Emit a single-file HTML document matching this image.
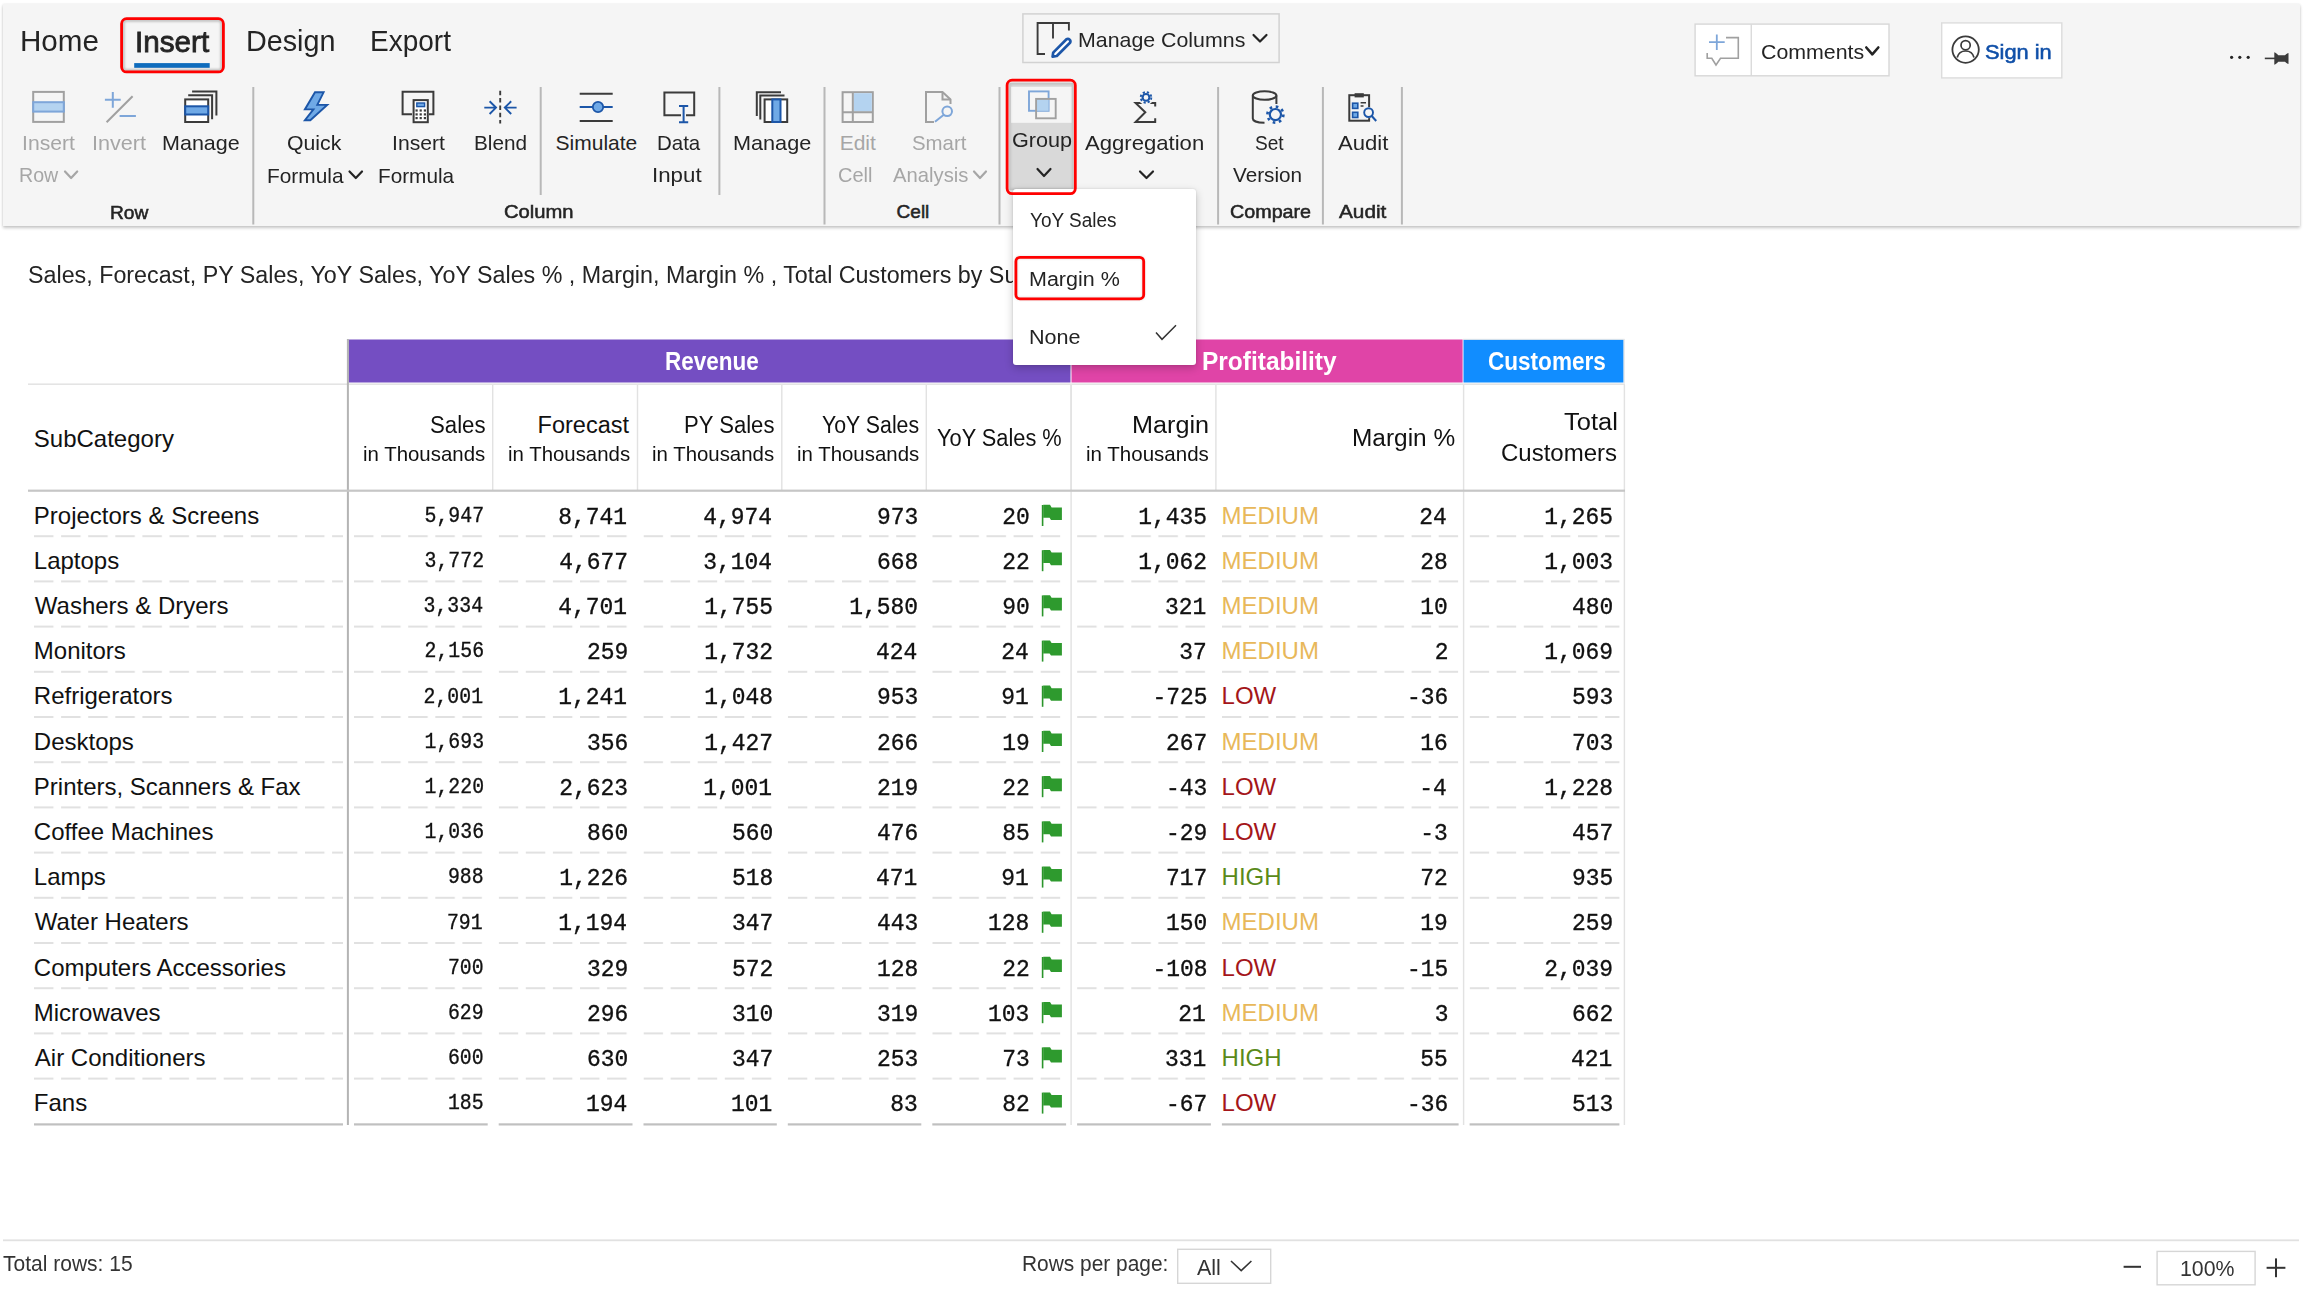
<!DOCTYPE html>
<html><head><meta charset="utf-8"><title>Insert ribbon</title>
<style>
html,body{margin:0;padding:0;background:#fff;width:2304px;height:1289px;overflow:hidden;}
body{position:relative;font-family:"Liberation Sans",sans-serif;}
.t{position:absolute;white-space:nowrap;}
.ribbon{position:absolute;left:3px;top:4px;width:2297px;height:222px;background:#f5f5f5;box-shadow:0 2px 3px rgba(0,0,0,0.22), 0 0 2px rgba(0,0,0,0.08);}
.dd{position:absolute;left:1012.5px;top:189px;width:183px;height:175.6px;background:#fff;border-radius:3px;box-shadow:0 3px 8px rgba(0,0,0,0.22),0 0 2px rgba(0,0,0,0.12);}
svg{position:absolute;left:0;top:0;}
</style></head><body>
<div class="ribbon"></div>
<svg width="2304" height="1289" viewBox="0 0 2304 1289"><defs>
<filter id="blur1" x="-20%" y="-20%" width="140%" height="140%"><feGaussianBlur stdDeviation="1.2"/></filter>
<pattern id="dash0" x="34.0" y="0" width="27.1" height="10" patternUnits="userSpaceOnUse"><rect x="0" y="0" width="19.5" height="10" fill="#e1e1e1"/></pattern><pattern id="dash1" x="354.0" y="0" width="27.1" height="10" patternUnits="userSpaceOnUse"><rect x="0" y="0" width="19.5" height="10" fill="#e1e1e1"/></pattern><pattern id="dash2" x="498.7" y="0" width="27.1" height="10" patternUnits="userSpaceOnUse"><rect x="0" y="0" width="19.5" height="10" fill="#e1e1e1"/></pattern><pattern id="dash3" x="643.5" y="0" width="27.1" height="10" patternUnits="userSpaceOnUse"><rect x="0" y="0" width="19.5" height="10" fill="#e1e1e1"/></pattern><pattern id="dash4" x="787.8" y="0" width="27.1" height="10" patternUnits="userSpaceOnUse"><rect x="0" y="0" width="19.5" height="10" fill="#e1e1e1"/></pattern><pattern id="dash5" x="932.3" y="0" width="27.1" height="10" patternUnits="userSpaceOnUse"><rect x="0" y="0" width="19.5" height="10" fill="#e1e1e1"/></pattern><pattern id="dash6" x="1077.1" y="0" width="27.1" height="10" patternUnits="userSpaceOnUse"><rect x="0" y="0" width="19.5" height="10" fill="#e1e1e1"/></pattern><pattern id="dash7" x="1221.9" y="0" width="27.1" height="10" patternUnits="userSpaceOnUse"><rect x="0" y="0" width="19.5" height="10" fill="#e1e1e1"/></pattern><pattern id="dash8" x="1469.6" y="0" width="27.1" height="10" patternUnits="userSpaceOnUse"><rect x="0" y="0" width="19.5" height="10" fill="#e1e1e1"/></pattern>
</defs>
<rect x="134.2" y="63.1" width="75.5" height="4.7" fill="#0f6cbd"/>
<rect x="123.2" y="20.2" width="98.6" height="50.2" rx="3" fill="none" stroke="#000" stroke-opacity="0.22" stroke-width="3" filter="url(#blur1)"/>
<rect x="121.6" y="18.7" width="101.8" height="53.2" rx="5" fill="none" stroke="#ff0000" stroke-width="2.8"/>
<rect x="252.3" y="87" width="2" height="137.5" fill="#b8b8b8"/>
<rect x="539.7" y="87" width="2" height="108.0" fill="#b8b8b8"/>
<rect x="718.4" y="87" width="2" height="108.0" fill="#b8b8b8"/>
<rect x="823.5" y="87" width="2" height="137.5" fill="#b8b8b8"/>
<rect x="998.5" y="87" width="2" height="137.5" fill="#b8b8b8"/>
<rect x="1217.1" y="87" width="2" height="137.5" fill="#b8b8b8"/>
<rect x="1321.9" y="87" width="2" height="137.5" fill="#b8b8b8"/>
<rect x="1400.9" y="87" width="2" height="137.5" fill="#b8b8b8"/>
<rect x="33.2" y="91.9" width="30.6" height="30" fill="none" stroke="#a0a0a0" stroke-width="2"/>
<rect x="33.2" y="102.2" width="30.6" height="9.4" fill="#b4d3f0" stroke="#7ea6d9" stroke-width="2"/>
<path d="M65.0 171.5 L71.1 178.0 L77.2 171.5" fill="none" stroke="#a6a6a6" stroke-width="2.2" stroke-linecap="round" stroke-linejoin="round"/>
<path d="M104.9 99.8 H120.7 M112.8 92 V107.7" stroke="#7ea6d9" stroke-width="2" fill="none"/>
<path d="M119.6 116 H135.9" stroke="#7ea6d9" stroke-width="2" fill="none"/>
<path d="M106.6 122.3 L132.6 96.3" stroke="#a0a0a0" stroke-width="2" fill="none"/>
<path d="M192.1 91.4 H216.4 V115.4" fill="none" stroke="#3b3b3b" stroke-width="2"/>
<path d="M188.2 95.3 H212.1 V119.3" fill="none" stroke="#3b3b3b" stroke-width="2"/>
<rect x="185.2" y="99.4" width="23" height="22.6" fill="#fff" stroke="#3b3b3b" stroke-width="2"/>
<rect x="185.2" y="106.3" width="23" height="8.2" fill="#6fa9e6" stroke="#1c56a8" stroke-width="2"/>
<path d="M315 92.3 H323.6 L317.3 104.9 H327.2 L310.3 120.2 H304.9 L313.4 109.4 H304.9 Z" fill="#6fa9e6" stroke="#1c56a8" stroke-width="1.9" stroke-linejoin="miter"/>
<path d="M349.5 171.5 L355.8 178.0 L362.0 171.5" fill="none" stroke="#242424" stroke-width="2.2" stroke-linecap="round" stroke-linejoin="round"/>
<path d="M412 114.3 H402.6 V91.8 H433.4 V114.3 H429" fill="none" stroke="#3b3b3b" stroke-width="2"/>
<rect x="413.6" y="100.1" width="14.2" height="22.1" fill="#fff" stroke="#3b3b3b" stroke-width="2"/>
<rect x="416.8" y="103" width="7.8" height="3.6" fill="#6fa9e6" stroke="#1c56a8" stroke-width="1.4"/>
<rect x="415.5" y="109.4" width="2.2" height="2.2" fill="#3b3b3b"/>
<rect x="419.6" y="109.4" width="2.2" height="2.2" fill="#3b3b3b"/>
<rect x="423.8" y="109.4" width="2.2" height="2.2" fill="#3b3b3b"/>
<rect x="415.5" y="113.3" width="2.2" height="2.2" fill="#3b3b3b"/>
<rect x="419.6" y="113.3" width="2.2" height="2.2" fill="#3b3b3b"/>
<rect x="423.8" y="113.3" width="2.2" height="2.2" fill="#3b3b3b"/>
<rect x="415.5" y="117.0" width="2.2" height="2.2" fill="#3b3b3b"/>
<rect x="419.6" y="117.0" width="2.2" height="2.2" fill="#3b3b3b"/>
<rect x="423.8" y="117.0" width="2.2" height="2.2" fill="#3b3b3b"/>
<path d="M500.2 90.8 V123.5" stroke="#3b3b3b" stroke-width="1.9" stroke-dasharray="4.5 2.8"/>
<path d="M484.3 107.6 H496 M489.6 101.3 L496 107.6 L489.6 114" fill="none" stroke="#1c56a8" stroke-width="1.9"/>
<path d="M516.6 107.6 H505 M511.2 101.3 L504.8 107.6 L511.2 114" fill="none" stroke="#1c56a8" stroke-width="1.9"/>
<path d="M579.7 93.7 H612.7 M579.7 121 H612.7" stroke="#3b3b3b" stroke-width="2"/>
<path d="M579.7 107 H612.7" stroke="#1c56a8" stroke-width="2"/>
<circle cx="598" cy="107" r="5.2" fill="#6fa9e6" stroke="#1c56a8" stroke-width="1.8"/>
<path d="M681 115.2 H664.4 V92.4 H694.2 V115.2 H686" fill="none" stroke="#3b3b3b" stroke-width="2"/>
<path d="M683.6 106 V122.3 M679 106 H688.2 M679 122.3 H688.2" fill="none" stroke="#1c56a8" stroke-width="2"/>
<path d="M756.8 116 V92.3 H781" fill="none" stroke="#3b3b3b" stroke-width="2"/>
<path d="M760.3 119.5 V95.6 H784.5" fill="none" stroke="#3b3b3b" stroke-width="2"/>
<rect x="764.6" y="99.4" width="22.6" height="22.6" fill="#fff" stroke="#3b3b3b" stroke-width="2"/>
<rect x="772.3" y="99.4" width="8.2" height="22.6" fill="#6fa9e6" stroke="#1c56a8" stroke-width="2"/>
<rect x="842.6" y="92.2" width="30.2" height="29.8" fill="none" stroke="#a0a0a0" stroke-width="2"/>
<rect x="853.6" y="93.2" width="18.2" height="18.4" fill="#b4d3f0"/>
<path d="M852.8 92.2 V122 M842.6 112.2 H872.8" stroke="#a0a0a0" stroke-width="2"/>
<path d="M934 122 H926 V92 H942.5 L950.5 99.5 V104" fill="none" stroke="#a0a0a0" stroke-width="2"/>
<path d="M942.5 92 V99.5 H950.5" fill="none" stroke="#a0a0a0" stroke-width="2"/>
<circle cx="947.2" cy="111.3" r="4.8" fill="none" stroke="#7ea6d9" stroke-width="2"/>
<path d="M943.8 114.8 L935 121.8" stroke="#7ea6d9" stroke-width="2"/>
<path d="M974.0 171.5 L980.0 178.0 L986.0 171.5" fill="none" stroke="#a6a6a6" stroke-width="2.2" stroke-linecap="round" stroke-linejoin="round"/>
<rect x="1009.2" y="83" width="64.2" height="107" fill="#d9d9d9"/>
<rect x="1011" y="86.8" width="60.6" height="36" fill="#f5f5f5"/>
<rect x="1009.2" y="83" width="64.2" height="107" fill="none" stroke="#000" stroke-opacity="0.12" stroke-width="3" filter="url(#blur1)"/>
<rect x="1029" y="91.4" width="19.6" height="19.4" fill="none" stroke="#7ea6d9" stroke-width="1.9"/>
<rect x="1036.1" y="98.9" width="12.5" height="11.9" fill="#b4d3f0"/>
<rect x="1036.1" y="98.9" width="19.6" height="19.4" fill="none" stroke="#a0a0a0" stroke-width="1.9"/>
<path d="M1037.5 169.0 L1044.0 176.0 L1050.5 169.0" fill="none" stroke="#242424" stroke-width="2.2" stroke-linecap="round" stroke-linejoin="round"/>
<path d="M1155.2 106.6 V103 H1135.6 L1145.3 112.3 L1135.6 122.1 H1155.2 V118.2" fill="none" stroke="#3b3b3b" stroke-width="2" stroke-linejoin="miter"/>
<circle cx="1146" cy="97.4" r="7.6" fill="#f5f5f5"/>
<circle cx="1146" cy="97.4" r="3.4" fill="none" stroke="#1c56a8" stroke-width="2.1"/>
<circle cx="1146" cy="97.4" r="5.3" fill="none" stroke="#1c56a8" stroke-width="1.9" stroke-dasharray="2.2 2.0"/>
<path d="M1140.0 171.5 L1146.5 178.0 L1153.0 171.5" fill="none" stroke="#242424" stroke-width="2.2" stroke-linecap="round" stroke-linejoin="round"/>
<path d="M1264.5 122.8 C1257 122.8 1252.8 120.8 1252.8 118.5 V95.5" fill="none" stroke="#3b3b3b" stroke-width="2"/>
<ellipse cx="1264.6" cy="95.5" rx="11.8" ry="4.3" fill="none" stroke="#3b3b3b" stroke-width="2"/>
<path d="M1276.4 95.5 V104" fill="none" stroke="#3b3b3b" stroke-width="2"/>
<circle cx="1275.4" cy="114.6" r="5.6" fill="none" stroke="#1c56a8" stroke-width="2.2"/>
<circle cx="1275.4" cy="114.6" r="8" fill="none" stroke="#1c56a8" stroke-width="2.6" stroke-dasharray="2.6 3.7"/>
<rect x="1349.3" y="95.2" width="19.8" height="25.5" fill="none" stroke="#3b3b3b" stroke-width="2"/>
<rect x="1354.6" y="93.2" width="9.2" height="4.2" fill="#3b3b3b"/>
<rect x="1352.6" y="103.2" width="5.2" height="5.2" fill="#6fa9e6" stroke="#1c56a8" stroke-width="1.6"/>
<rect x="1352.6" y="112.3" width="5.2" height="5.2" fill="#6fa9e6" stroke="#1c56a8" stroke-width="1.6"/>
<path d="M1360.6 102.8 H1366 M1360.6 106 H1363.5" stroke="#3b3b3b" stroke-width="1.4"/>
<circle cx="1368.6" cy="112.6" r="5.6" fill="#f5f5f5"/>
<circle cx="1368.6" cy="112.6" r="4.4" fill="none" stroke="#1c56a8" stroke-width="1.9"/>
<path d="M1371.8 116 L1376.2 121" stroke="#1c56a8" stroke-width="2"/>
<rect x="1022.9" y="13.9" width="256.2" height="48.6" fill="none" stroke="#d2d2d2" stroke-width="1.5"/>
<path d="M1045 54 H1037.6 V23 H1068.9 V30.5 M1053 23 V38.4" fill="none" stroke="#3b3b3b" stroke-width="1.9"/>
<path d="M1053.2 52.6 L1066.5 39.2 A2.6 2.6 0 0 1 1070 42.8 L1056.8 56 L1052.6 56.6 Z" fill="#fff" stroke="#1c56a8" stroke-width="2.7" stroke-linejoin="round"/>
<path d="M1253.5 35.0 L1260.0 41.5 L1266.5 35.0" fill="none" stroke="#242424" stroke-width="2.2" stroke-linecap="round" stroke-linejoin="round"/>
<rect x="1695.1" y="24.1" width="193.9" height="51.7" fill="#fff" stroke="#d8d8d8" stroke-width="1.4"/>
<rect x="1750.6" y="24.5" width="1.3" height="51" fill="#d8d8d8"/>
<path d="M1726 37.6 H1738.3 V58.3 H1720.5 L1716 65 L1711.8 58.3 H1707.2 V53" fill="none" stroke="#a0a0a0" stroke-width="1.6"/>
<path d="M1709 42.1 H1724.7 M1716.8 34.4 V50" stroke="#7ea6d9" stroke-width="1.8"/>
<path d="M1866.3 47.5 L1872.3 54.3 L1878.3 47.5" fill="none" stroke="#242424" stroke-width="2.6" stroke-linecap="round" stroke-linejoin="round"/>
<rect x="1941.7" y="22.9" width="120.1" height="55" fill="#fff" stroke="#dcdcdc" stroke-width="1.4"/>
<circle cx="1965.6" cy="49.6" r="13.2" fill="none" stroke="#3b3b3b" stroke-width="1.8"/>
<circle cx="1965.6" cy="45.2" r="4.6" fill="none" stroke="#3b3b3b" stroke-width="1.7"/>
<path d="M1957.2 57.5 C1958.5 52.6 1962 51 1965.6 51 C1969.2 51 1972.7 52.6 1974 57.5" fill="none" stroke="#3b3b3b" stroke-width="1.7"/>
<circle cx="2231.6" cy="57.3" r="1.6" fill="#242424"/>
<circle cx="2239.8" cy="57.3" r="1.6" fill="#242424"/>
<circle cx="2248.2" cy="57.3" r="1.6" fill="#242424"/>
<path d="M2264.8 58.4 H2275" stroke="#3b3b3b" stroke-width="1.6"/>
<path d="M2274.3 52.2 C2276 52.8 2277 54 2278.3 55.2 H2285 C2286 54.2 2287 53.5 2288.5 53 V64 C2287 63.5 2286 62.8 2285 61.8 H2278.3 C2277 63 2276 64.2 2274.3 64.8 Z" fill="#3b3b3b"/>
<rect x="348.4" y="339.5" width="722.1" height="43" fill="#744ec2"/>
<rect x="1071.5" y="339.5" width="391.1" height="43" fill="#e044a7"/>
<rect x="1463.5" y="339.5" width="160.1" height="43" fill="#118dff"/>
<rect x="1623.6" y="339" width="1.2" height="44" fill="#e6e6e6"/>
<rect x="1463" y="338.8" width="161.6" height="1" fill="#e6e6e6"/>
<rect x="28" y="383.4" width="1597" height="1.6" fill="#e4e4e4"/>
<rect x="346.9" y="339" width="2" height="786" fill="#b4b4b4"/>
<rect x="492.0" y="385" width="1.4" height="105" fill="#e2e2e2"/>
<rect x="636.8" y="385" width="1.4" height="105" fill="#e2e2e2"/>
<rect x="781.1" y="385" width="1.4" height="105" fill="#e2e2e2"/>
<rect x="925.6" y="385" width="1.4" height="105" fill="#e2e2e2"/>
<rect x="1070.4" y="385" width="1.4" height="105" fill="#e2e2e2"/>
<rect x="1215.2" y="385" width="1.4" height="105" fill="#e2e2e2"/>
<rect x="1070.4" y="385" width="1.4" height="740" fill="#e2e2e2"/>
<rect x="1462.9" y="385" width="1.4" height="740" fill="#e2e2e2"/>
<rect x="1623.7" y="385" width="1.4" height="740" fill="#e2e2e2"/>
<rect x="28" y="489.6" width="1597" height="2.2" fill="#c6c6c6"/>
<path d="M1042.6 505.0 V526.0" stroke="#2a952a" stroke-width="1.6"/>
<path d="M1043.2 504.8 H1050 L1051.6 507.4 H1061.9 V520.0 H1051 L1049.6 517.8 H1043.2 Z" fill="#2e9a2e"/>
<rect x="34.0" y="535.2" width="309.0" height="2" fill="url(#dash0)"/>
<rect x="354.0" y="535.2" width="133.7" height="2" fill="url(#dash1)"/>
<rect x="498.7" y="535.2" width="133.8" height="2" fill="url(#dash2)"/>
<rect x="643.5" y="535.2" width="133.3" height="2" fill="url(#dash3)"/>
<rect x="787.8" y="535.2" width="133.5" height="2" fill="url(#dash4)"/>
<rect x="932.3" y="535.2" width="133.8" height="2" fill="url(#dash5)"/>
<rect x="1077.1" y="535.2" width="133.8" height="2" fill="url(#dash6)"/>
<rect x="1221.9" y="535.2" width="236.7" height="2" fill="url(#dash7)"/>
<rect x="1469.6" y="535.2" width="149.8" height="2" fill="url(#dash8)"/>
<path d="M1042.6 550.2 V571.2" stroke="#2a952a" stroke-width="1.6"/>
<path d="M1043.2 550.0 H1050 L1051.6 552.6 H1061.9 V565.2 H1051 L1049.6 563.0 H1043.2 Z" fill="#2e9a2e"/>
<rect x="34.0" y="580.4" width="309.0" height="2" fill="url(#dash0)"/>
<rect x="354.0" y="580.4" width="133.7" height="2" fill="url(#dash1)"/>
<rect x="498.7" y="580.4" width="133.8" height="2" fill="url(#dash2)"/>
<rect x="643.5" y="580.4" width="133.3" height="2" fill="url(#dash3)"/>
<rect x="787.8" y="580.4" width="133.5" height="2" fill="url(#dash4)"/>
<rect x="932.3" y="580.4" width="133.8" height="2" fill="url(#dash5)"/>
<rect x="1077.1" y="580.4" width="133.8" height="2" fill="url(#dash6)"/>
<rect x="1221.9" y="580.4" width="236.7" height="2" fill="url(#dash7)"/>
<rect x="1469.6" y="580.4" width="149.8" height="2" fill="url(#dash8)"/>
<path d="M1042.6 595.4 V616.4" stroke="#2a952a" stroke-width="1.6"/>
<path d="M1043.2 595.2 H1050 L1051.6 597.8 H1061.9 V610.4 H1051 L1049.6 608.2 H1043.2 Z" fill="#2e9a2e"/>
<rect x="34.0" y="625.6" width="309.0" height="2" fill="url(#dash0)"/>
<rect x="354.0" y="625.6" width="133.7" height="2" fill="url(#dash1)"/>
<rect x="498.7" y="625.6" width="133.8" height="2" fill="url(#dash2)"/>
<rect x="643.5" y="625.6" width="133.3" height="2" fill="url(#dash3)"/>
<rect x="787.8" y="625.6" width="133.5" height="2" fill="url(#dash4)"/>
<rect x="932.3" y="625.6" width="133.8" height="2" fill="url(#dash5)"/>
<rect x="1077.1" y="625.6" width="133.8" height="2" fill="url(#dash6)"/>
<rect x="1221.9" y="625.6" width="236.7" height="2" fill="url(#dash7)"/>
<rect x="1469.6" y="625.6" width="149.8" height="2" fill="url(#dash8)"/>
<path d="M1042.6 640.6 V661.6" stroke="#2a952a" stroke-width="1.6"/>
<path d="M1043.2 640.4 H1050 L1051.6 643.0 H1061.9 V655.6 H1051 L1049.6 653.4 H1043.2 Z" fill="#2e9a2e"/>
<rect x="34.0" y="670.8" width="309.0" height="2" fill="url(#dash0)"/>
<rect x="354.0" y="670.8" width="133.7" height="2" fill="url(#dash1)"/>
<rect x="498.7" y="670.8" width="133.8" height="2" fill="url(#dash2)"/>
<rect x="643.5" y="670.8" width="133.3" height="2" fill="url(#dash3)"/>
<rect x="787.8" y="670.8" width="133.5" height="2" fill="url(#dash4)"/>
<rect x="932.3" y="670.8" width="133.8" height="2" fill="url(#dash5)"/>
<rect x="1077.1" y="670.8" width="133.8" height="2" fill="url(#dash6)"/>
<rect x="1221.9" y="670.8" width="236.7" height="2" fill="url(#dash7)"/>
<rect x="1469.6" y="670.8" width="149.8" height="2" fill="url(#dash8)"/>
<path d="M1042.6 685.8 V706.8" stroke="#2a952a" stroke-width="1.6"/>
<path d="M1043.2 685.6 H1050 L1051.6 688.2 H1061.9 V700.8 H1051 L1049.6 698.6 H1043.2 Z" fill="#2e9a2e"/>
<rect x="34.0" y="716.0" width="309.0" height="2" fill="url(#dash0)"/>
<rect x="354.0" y="716.0" width="133.7" height="2" fill="url(#dash1)"/>
<rect x="498.7" y="716.0" width="133.8" height="2" fill="url(#dash2)"/>
<rect x="643.5" y="716.0" width="133.3" height="2" fill="url(#dash3)"/>
<rect x="787.8" y="716.0" width="133.5" height="2" fill="url(#dash4)"/>
<rect x="932.3" y="716.0" width="133.8" height="2" fill="url(#dash5)"/>
<rect x="1077.1" y="716.0" width="133.8" height="2" fill="url(#dash6)"/>
<rect x="1221.9" y="716.0" width="236.7" height="2" fill="url(#dash7)"/>
<rect x="1469.6" y="716.0" width="149.8" height="2" fill="url(#dash8)"/>
<path d="M1042.6 731.0 V752.0" stroke="#2a952a" stroke-width="1.6"/>
<path d="M1043.2 730.8 H1050 L1051.6 733.4 H1061.9 V746.0 H1051 L1049.6 743.8 H1043.2 Z" fill="#2e9a2e"/>
<rect x="34.0" y="761.2" width="309.0" height="2" fill="url(#dash0)"/>
<rect x="354.0" y="761.2" width="133.7" height="2" fill="url(#dash1)"/>
<rect x="498.7" y="761.2" width="133.8" height="2" fill="url(#dash2)"/>
<rect x="643.5" y="761.2" width="133.3" height="2" fill="url(#dash3)"/>
<rect x="787.8" y="761.2" width="133.5" height="2" fill="url(#dash4)"/>
<rect x="932.3" y="761.2" width="133.8" height="2" fill="url(#dash5)"/>
<rect x="1077.1" y="761.2" width="133.8" height="2" fill="url(#dash6)"/>
<rect x="1221.9" y="761.2" width="236.7" height="2" fill="url(#dash7)"/>
<rect x="1469.6" y="761.2" width="149.8" height="2" fill="url(#dash8)"/>
<path d="M1042.6 776.2 V797.2" stroke="#2a952a" stroke-width="1.6"/>
<path d="M1043.2 776.0 H1050 L1051.6 778.6 H1061.9 V791.2 H1051 L1049.6 789.0 H1043.2 Z" fill="#2e9a2e"/>
<rect x="34.0" y="806.4" width="309.0" height="2" fill="url(#dash0)"/>
<rect x="354.0" y="806.4" width="133.7" height="2" fill="url(#dash1)"/>
<rect x="498.7" y="806.4" width="133.8" height="2" fill="url(#dash2)"/>
<rect x="643.5" y="806.4" width="133.3" height="2" fill="url(#dash3)"/>
<rect x="787.8" y="806.4" width="133.5" height="2" fill="url(#dash4)"/>
<rect x="932.3" y="806.4" width="133.8" height="2" fill="url(#dash5)"/>
<rect x="1077.1" y="806.4" width="133.8" height="2" fill="url(#dash6)"/>
<rect x="1221.9" y="806.4" width="236.7" height="2" fill="url(#dash7)"/>
<rect x="1469.6" y="806.4" width="149.8" height="2" fill="url(#dash8)"/>
<path d="M1042.6 821.4 V842.4" stroke="#2a952a" stroke-width="1.6"/>
<path d="M1043.2 821.2 H1050 L1051.6 823.8 H1061.9 V836.4 H1051 L1049.6 834.2 H1043.2 Z" fill="#2e9a2e"/>
<rect x="34.0" y="851.6" width="309.0" height="2" fill="url(#dash0)"/>
<rect x="354.0" y="851.6" width="133.7" height="2" fill="url(#dash1)"/>
<rect x="498.7" y="851.6" width="133.8" height="2" fill="url(#dash2)"/>
<rect x="643.5" y="851.6" width="133.3" height="2" fill="url(#dash3)"/>
<rect x="787.8" y="851.6" width="133.5" height="2" fill="url(#dash4)"/>
<rect x="932.3" y="851.6" width="133.8" height="2" fill="url(#dash5)"/>
<rect x="1077.1" y="851.6" width="133.8" height="2" fill="url(#dash6)"/>
<rect x="1221.9" y="851.6" width="236.7" height="2" fill="url(#dash7)"/>
<rect x="1469.6" y="851.6" width="149.8" height="2" fill="url(#dash8)"/>
<path d="M1042.6 866.6 V887.6" stroke="#2a952a" stroke-width="1.6"/>
<path d="M1043.2 866.4 H1050 L1051.6 869.0 H1061.9 V881.6 H1051 L1049.6 879.4 H1043.2 Z" fill="#2e9a2e"/>
<rect x="34.0" y="896.8" width="309.0" height="2" fill="url(#dash0)"/>
<rect x="354.0" y="896.8" width="133.7" height="2" fill="url(#dash1)"/>
<rect x="498.7" y="896.8" width="133.8" height="2" fill="url(#dash2)"/>
<rect x="643.5" y="896.8" width="133.3" height="2" fill="url(#dash3)"/>
<rect x="787.8" y="896.8" width="133.5" height="2" fill="url(#dash4)"/>
<rect x="932.3" y="896.8" width="133.8" height="2" fill="url(#dash5)"/>
<rect x="1077.1" y="896.8" width="133.8" height="2" fill="url(#dash6)"/>
<rect x="1221.9" y="896.8" width="236.7" height="2" fill="url(#dash7)"/>
<rect x="1469.6" y="896.8" width="149.8" height="2" fill="url(#dash8)"/>
<path d="M1042.6 911.8 V932.8" stroke="#2a952a" stroke-width="1.6"/>
<path d="M1043.2 911.6 H1050 L1051.6 914.2 H1061.9 V926.8 H1051 L1049.6 924.6 H1043.2 Z" fill="#2e9a2e"/>
<rect x="34.0" y="942.0" width="309.0" height="2" fill="url(#dash0)"/>
<rect x="354.0" y="942.0" width="133.7" height="2" fill="url(#dash1)"/>
<rect x="498.7" y="942.0" width="133.8" height="2" fill="url(#dash2)"/>
<rect x="643.5" y="942.0" width="133.3" height="2" fill="url(#dash3)"/>
<rect x="787.8" y="942.0" width="133.5" height="2" fill="url(#dash4)"/>
<rect x="932.3" y="942.0" width="133.8" height="2" fill="url(#dash5)"/>
<rect x="1077.1" y="942.0" width="133.8" height="2" fill="url(#dash6)"/>
<rect x="1221.9" y="942.0" width="236.7" height="2" fill="url(#dash7)"/>
<rect x="1469.6" y="942.0" width="149.8" height="2" fill="url(#dash8)"/>
<path d="M1042.6 957.0 V978.0" stroke="#2a952a" stroke-width="1.6"/>
<path d="M1043.2 956.8 H1050 L1051.6 959.4 H1061.9 V972.0 H1051 L1049.6 969.8 H1043.2 Z" fill="#2e9a2e"/>
<rect x="34.0" y="987.2" width="309.0" height="2" fill="url(#dash0)"/>
<rect x="354.0" y="987.2" width="133.7" height="2" fill="url(#dash1)"/>
<rect x="498.7" y="987.2" width="133.8" height="2" fill="url(#dash2)"/>
<rect x="643.5" y="987.2" width="133.3" height="2" fill="url(#dash3)"/>
<rect x="787.8" y="987.2" width="133.5" height="2" fill="url(#dash4)"/>
<rect x="932.3" y="987.2" width="133.8" height="2" fill="url(#dash5)"/>
<rect x="1077.1" y="987.2" width="133.8" height="2" fill="url(#dash6)"/>
<rect x="1221.9" y="987.2" width="236.7" height="2" fill="url(#dash7)"/>
<rect x="1469.6" y="987.2" width="149.8" height="2" fill="url(#dash8)"/>
<path d="M1042.6 1002.2 V1023.2" stroke="#2a952a" stroke-width="1.6"/>
<path d="M1043.2 1002.0 H1050 L1051.6 1004.6 H1061.9 V1017.2 H1051 L1049.6 1015.0 H1043.2 Z" fill="#2e9a2e"/>
<rect x="34.0" y="1032.4" width="309.0" height="2" fill="url(#dash0)"/>
<rect x="354.0" y="1032.4" width="133.7" height="2" fill="url(#dash1)"/>
<rect x="498.7" y="1032.4" width="133.8" height="2" fill="url(#dash2)"/>
<rect x="643.5" y="1032.4" width="133.3" height="2" fill="url(#dash3)"/>
<rect x="787.8" y="1032.4" width="133.5" height="2" fill="url(#dash4)"/>
<rect x="932.3" y="1032.4" width="133.8" height="2" fill="url(#dash5)"/>
<rect x="1077.1" y="1032.4" width="133.8" height="2" fill="url(#dash6)"/>
<rect x="1221.9" y="1032.4" width="236.7" height="2" fill="url(#dash7)"/>
<rect x="1469.6" y="1032.4" width="149.8" height="2" fill="url(#dash8)"/>
<path d="M1042.6 1047.4 V1068.4" stroke="#2a952a" stroke-width="1.6"/>
<path d="M1043.2 1047.2 H1050 L1051.6 1049.8 H1061.9 V1062.4 H1051 L1049.6 1060.2 H1043.2 Z" fill="#2e9a2e"/>
<rect x="34.0" y="1077.6" width="309.0" height="2" fill="url(#dash0)"/>
<rect x="354.0" y="1077.6" width="133.7" height="2" fill="url(#dash1)"/>
<rect x="498.7" y="1077.6" width="133.8" height="2" fill="url(#dash2)"/>
<rect x="643.5" y="1077.6" width="133.3" height="2" fill="url(#dash3)"/>
<rect x="787.8" y="1077.6" width="133.5" height="2" fill="url(#dash4)"/>
<rect x="932.3" y="1077.6" width="133.8" height="2" fill="url(#dash5)"/>
<rect x="1077.1" y="1077.6" width="133.8" height="2" fill="url(#dash6)"/>
<rect x="1221.9" y="1077.6" width="236.7" height="2" fill="url(#dash7)"/>
<rect x="1469.6" y="1077.6" width="149.8" height="2" fill="url(#dash8)"/>
<path d="M1042.6 1092.6 V1113.6" stroke="#2a952a" stroke-width="1.6"/>
<path d="M1043.2 1092.4 H1050 L1051.6 1095.0 H1061.9 V1107.6 H1051 L1049.6 1105.4 H1043.2 Z" fill="#2e9a2e"/>
<rect x="34.0" y="1123.3" width="309.0" height="2.2" fill="#c0c0c0"/>
<rect x="354.0" y="1123.3" width="133.7" height="2.2" fill="#c0c0c0"/>
<rect x="498.7" y="1123.3" width="133.8" height="2.2" fill="#c0c0c0"/>
<rect x="643.5" y="1123.3" width="133.3" height="2.2" fill="#c0c0c0"/>
<rect x="787.8" y="1123.3" width="133.5" height="2.2" fill="#c0c0c0"/>
<rect x="932.3" y="1123.3" width="133.8" height="2.2" fill="#c0c0c0"/>
<rect x="1077.1" y="1123.3" width="133.8" height="2.2" fill="#c0c0c0"/>
<rect x="1221.9" y="1123.3" width="236.7" height="2.2" fill="#c0c0c0"/>
<rect x="1469.6" y="1123.3" width="149.8" height="2.2" fill="#c0c0c0"/>
<rect x="3" y="1239.4" width="2296" height="1.8" fill="#e1e1e1"/>
<rect x="1177.7" y="1249.3" width="93" height="34" fill="#fff" stroke="#d6d6d6" stroke-width="1.4"/>
<path d="M1231 1261 L1241.2 1270.6 L1251.4 1261" fill="none" stroke="#333" stroke-width="1.6"/>
<rect x="2123.6" y="1265.8" width="17.4" height="2" fill="#333"/>
<rect x="2157.1" y="1251.4" width="98" height="33.4" fill="#fff" stroke="#d6d6d6" stroke-width="1.4"/>
<rect x="2266.6" y="1266.8" width="18.8" height="2" fill="#333"/><rect x="2275" y="1258.4" width="2" height="18.8" fill="#333"/>
</svg>
<div class="t" style="left:20.13px;top:25.90px;font:normal 30px/30px 'Liberation Sans';color:#242424;transform:scaleX(0.9866);transform-origin:0 0;">Home</div>
<div class="t" style="left:134.62px;top:26.50px;font:normal 30px/30px 'Liberation Sans';color:#242424;transform:scaleX(0.9879);transform-origin:0 0;-webkit-text-stroke:0.84px #242424;">Insert</div>
<div class="t" style="left:245.58px;top:25.90px;font:normal 30px/30px 'Liberation Sans';color:#242424;transform:scaleX(0.9576);transform-origin:0 0;">Design</div>
<div class="t" style="left:369.83px;top:25.90px;font:normal 30px/30px 'Liberation Sans';color:#242424;transform:scaleX(0.9336);transform-origin:0 0;">Export</div>
<div class="t" style="left:21.99px;top:132.22px;font:normal 21px/21px 'Liberation Sans';color:#a6a6a6;transform:scaleX(1.0080);transform-origin:0 0;">Insert</div>
<div class="t" style="left:19.37px;top:164.22px;font:normal 21px/21px 'Liberation Sans';color:#a6a6a6;transform:scaleX(0.9344);transform-origin:0 0;">Row</div>
<div class="t" style="left:92.47px;top:132.22px;font:normal 21px/21px 'Liberation Sans';color:#a6a6a6;transform:scaleX(1.0293);transform-origin:0 0;">Invert</div>
<div class="t" style="left:161.98px;top:132.22px;font:normal 21px/21px 'Liberation Sans';color:#242424;transform:scaleX(1.0241);transform-origin:0 0;">Manage</div>
<div class="t" style="left:109.69px;top:202.66px;font:normal 19px/19px 'Liberation Sans';color:#242424;transform:scaleX(1.0110);transform-origin:0 0;-webkit-text-stroke:0.53px #242424;">Row</div>
<div class="t" style="left:286.99px;top:132.22px;font:normal 21px/21px 'Liberation Sans';color:#242424;transform:scaleX(1.0117);transform-origin:0 0;">Quick</div>
<div class="t" style="left:267.21px;top:165.22px;font:normal 21px/21px 'Liberation Sans';color:#242424;transform:scaleX(0.9930);transform-origin:0 0;">Formula</div>
<div class="t" style="left:391.59px;top:132.22px;font:normal 21px/21px 'Liberation Sans';color:#242424;transform:scaleX(1.0080);transform-origin:0 0;">Insert</div>
<div class="t" style="left:378.01px;top:165.22px;font:normal 21px/21px 'Liberation Sans';color:#242424;transform:scaleX(0.9877);transform-origin:0 0;">Formula</div>
<div class="t" style="left:473.61px;top:132.22px;font:normal 21px/21px 'Liberation Sans';color:#242424;transform:scaleX(0.9879);transform-origin:0 0;">Blend</div>
<div class="t" style="left:555.60px;top:132.22px;font:normal 21px/21px 'Liberation Sans';color:#242424;">Simulate</div>
<div class="t" style="left:656.82px;top:132.22px;font:normal 21px/21px 'Liberation Sans';color:#242424;transform:scaleX(0.9753);transform-origin:0 0;">Data</div>
<div class="t" style="left:652.24px;top:164.22px;font:normal 21px/21px 'Liberation Sans';color:#242424;transform:scaleX(1.0616);transform-origin:0 0;">Input</div>
<div class="t" style="left:503.90px;top:201.91px;font:normal 19px/19px 'Liberation Sans';color:#242424;transform:scaleX(1.0631);transform-origin:0 0;-webkit-text-stroke:0.53px #242424;">Column</div>
<div class="t" style="left:733.27px;top:132.22px;font:normal 21px/21px 'Liberation Sans';color:#242424;transform:scaleX(1.0309);transform-origin:0 0;">Manage</div>
<div class="t" style="left:839.70px;top:132.22px;font:normal 21px/21px 'Liberation Sans';color:#a6a6a6;">Edit</div>
<div class="t" style="left:838.45px;top:164.22px;font:normal 21px/21px 'Liberation Sans';color:#a6a6a6;transform:scaleX(0.9533);transform-origin:0 0;">Cell</div>
<div class="t" style="left:912.40px;top:132.22px;font:normal 21px/21px 'Liberation Sans';color:#a6a6a6;transform:scaleX(0.9720);transform-origin:0 0;">Smart</div>
<div class="t" style="left:892.70px;top:164.22px;font:normal 21px/21px 'Liberation Sans';color:#a6a6a6;transform:scaleX(0.9640);transform-origin:0 0;">Analysis</div>
<div class="t" style="left:896.60px;top:202.21px;font:normal 19px/19px 'Liberation Sans';color:#242424;-webkit-text-stroke:0.53px #242424;">Cell</div>
<div class="t" style="left:1011.57px;top:129.02px;font:normal 21px/21px 'Liberation Sans';color:#242424;transform:scaleX(1.0302);transform-origin:0 0;">Group</div>
<div class="t" style="left:1085.20px;top:132.22px;font:normal 21px/21px 'Liberation Sans';color:#242424;transform:scaleX(1.0526);transform-origin:0 0;">Aggregation</div>
<div class="t" style="left:1254.60px;top:132.22px;font:normal 21px/21px 'Liberation Sans';color:#242424;transform:scaleX(0.9089);transform-origin:0 0;">Set</div>
<div class="t" style="left:1232.80px;top:164.22px;font:normal 21px/21px 'Liberation Sans';color:#242424;transform:scaleX(0.9861);transform-origin:0 0;">Version</div>
<div class="t" style="left:1230.30px;top:201.91px;font:normal 19px/19px 'Liberation Sans';color:#242424;transform:scaleX(1.0377);transform-origin:0 0;-webkit-text-stroke:0.53px #242424;">Compare</div>
<div class="t" style="left:1337.70px;top:132.22px;font:normal 21px/21px 'Liberation Sans';color:#242424;transform:scaleX(1.0514);transform-origin:0 0;">Audit</div>
<div class="t" style="left:1338.60px;top:201.91px;font:normal 19px/19px 'Liberation Sans';color:#242424;transform:scaleX(1.0925);transform-origin:0 0;-webkit-text-stroke:0.53px #242424;">Audit</div>
<div class="t" style="left:1078.28px;top:28.52px;font:normal 21px/21px 'Liberation Sans';color:#242424;transform:scaleX(1.0166);transform-origin:0 0;">Manage Columns</div>
<div class="t" style="left:1760.98px;top:40.52px;font:normal 21px/21px 'Liberation Sans';color:#242424;transform:scaleX(1.0168);transform-origin:0 0;">Comments</div>
<div class="t" style="left:1984.70px;top:40.52px;font:normal 21px/21px 'Liberation Sans';color:#0f4fa8;transform:scaleX(1.0389);transform-origin:0 0;-webkit-text-stroke:0.59px #0f4fa8;">Sign in</div>
<div class="t" style="left:28.10px;top:264.13px;font:normal 23px/23px 'Liberation Sans';color:#242424;transform:scaleX(1.012);transform-origin:0 0;">Sales, Forecast, PY Sales, YoY Sales, YoY Sales % , Margin, Margin % , Total Customers by SubCategory</div>
<div class="t" style="left:664.60px;top:348.83px;font:bold 25px/25px 'Liberation Sans';color:#fff;transform:scaleX(0.9002);transform-origin:0 0;">Revenue</div>
<div class="t" style="left:1201.92px;top:349.33px;font:bold 25px/25px 'Liberation Sans';color:#fff;transform:scaleX(0.9787);transform-origin:0 0;">Profitability</div>
<div class="t" style="left:1487.50px;top:349.33px;font:bold 25px/25px 'Liberation Sans';color:#fff;transform:scaleX(0.9022);transform-origin:0 0;">Customers</div>
<div class="t" style="left:33.80px;top:426.98px;font:normal 24px/24px 'Liberation Sans';color:#111;">SubCategory</div>
<div class="t" style="left:429.85px;top:413.60px;font:normal 23.5px/23.5px 'Liberation Sans';color:#111;transform:scaleX(0.9450);transform-origin:0 0;">Sales</div>
<div class="t" style="left:362.63px;top:443.12px;font:normal 21px/21px 'Liberation Sans';color:#111;transform:scaleX(0.9721);transform-origin:0 0;">in Thousands</div>
<div class="t" style="left:537.60px;top:413.60px;font:normal 23.5px/23.5px 'Liberation Sans';color:#111;">Forecast</div>
<div class="t" style="left:507.53px;top:443.12px;font:normal 21px/21px 'Liberation Sans';color:#111;transform:scaleX(0.9712);transform-origin:0 0;">in Thousands</div>
<div class="t" style="left:684.06px;top:413.60px;font:normal 23.5px/23.5px 'Liberation Sans';color:#111;transform:scaleX(0.9398);transform-origin:0 0;">PY Sales</div>
<div class="t" style="left:652.23px;top:443.12px;font:normal 21px/21px 'Liberation Sans';color:#111;transform:scaleX(0.9712);transform-origin:0 0;">in Thousands</div>
<div class="t" style="left:821.90px;top:413.60px;font:normal 23.5px/23.5px 'Liberation Sans';color:#111;transform:scaleX(0.9062);transform-origin:0 0;">YoY Sales</div>
<div class="t" style="left:796.63px;top:443.12px;font:normal 21px/21px 'Liberation Sans';color:#111;transform:scaleX(0.9721);transform-origin:0 0;">in Thousands</div>
<div class="t" style="left:937.30px;top:427.00px;font:normal 23.5px/23.5px 'Liberation Sans';color:#111;transform:scaleX(0.9267);transform-origin:0 0;">YoY Sales %</div>
<div class="t" style="left:1132.33px;top:413.60px;font:normal 23.5px/23.5px 'Liberation Sans';color:#111;transform:scaleX(1.0722);transform-origin:0 0;">Margin</div>
<div class="t" style="left:1085.52px;top:443.12px;font:normal 21px/21px 'Liberation Sans';color:#111;transform:scaleX(0.9769);transform-origin:0 0;">in Thousands</div>
<div class="t" style="left:1351.76px;top:426.60px;font:normal 23.5px/23.5px 'Liberation Sans';color:#111;transform:scaleX(1.0390);transform-origin:0 0;">Margin %</div>
<div class="t" style="left:1563.80px;top:410.70px;font:normal 23.5px/23.5px 'Liberation Sans';color:#111;transform:scaleX(1.0843);transform-origin:0 0;">Total</div>
<div class="t" style="left:1500.98px;top:442.30px;font:normal 23.5px/23.5px 'Liberation Sans';color:#111;transform:scaleX(1.0218);transform-origin:0 0;">Customers</div>
<div class="t" style="left:33.80px;top:503.68px;font:normal 24px/24px 'Liberation Sans';color:#111;">Projectors &amp; Screens</div>
<div class="t" style="left:417.87px;top:505.85px;font:normal 22px/22px 'Liberation Mono';color:#111;transform:scaleX(0.9);transform-origin:100% 0;-webkit-text-stroke:0.35px #111;">5,947</div>
<div class="t" style="left:555.37px;top:505.61px;font:normal 24px/24px 'Liberation Mono';color:#111;transform:scaleX(0.955);transform-origin:100% 0;-webkit-text-stroke:0.35px #111;">8,741</div>
<div class="t" style="left:700.37px;top:505.61px;font:normal 24px/24px 'Liberation Mono';color:#111;transform:scaleX(0.955);transform-origin:100% 0;-webkit-text-stroke:0.35px #111;">4,974</div>
<div class="t" style="left:874.73px;top:505.61px;font:normal 24px/24px 'Liberation Mono';color:#111;transform:scaleX(0.955);transform-origin:100% 0;-webkit-text-stroke:0.35px #111;">973</div>
<div class="t" style="left:1000.53px;top:505.61px;font:normal 24px/24px 'Liberation Mono';color:#111;transform:scaleX(0.955);transform-origin:100% 0;-webkit-text-stroke:0.35px #111;">20</div>
<div class="t" style="left:1135.13px;top:505.61px;font:normal 24px/24px 'Liberation Mono';color:#111;transform:scaleX(0.955);transform-origin:100% 0;-webkit-text-stroke:0.35px #111;">1,435</div>
<div class="t" style="left:1221.60px;top:503.68px;font:normal 24px/24px 'Liberation Sans';color:#e8b85a;">MEDIUM</div>
<div class="t" style="left:1418.28px;top:505.61px;font:normal 24px/24px 'Liberation Mono';color:#111;transform:scaleX(0.955);transform-origin:100% 0;-webkit-text-stroke:0.35px #111;">24</div>
<div class="t" style="left:1541.33px;top:505.61px;font:normal 24px/24px 'Liberation Mono';color:#111;transform:scaleX(0.955);transform-origin:100% 0;-webkit-text-stroke:0.35px #111;">1,265</div>
<div class="t" style="left:33.80px;top:548.88px;font:normal 24px/24px 'Liberation Sans';color:#111;">Laptops</div>
<div class="t" style="left:417.87px;top:551.05px;font:normal 22px/22px 'Liberation Mono';color:#111;transform:scaleX(0.9);transform-origin:100% 0;-webkit-text-stroke:0.35px #111;">3,772</div>
<div class="t" style="left:556.33px;top:550.81px;font:normal 24px/24px 'Liberation Mono';color:#111;transform:scaleX(0.955);transform-origin:100% 0;-webkit-text-stroke:0.35px #111;">4,677</div>
<div class="t" style="left:700.37px;top:550.81px;font:normal 24px/24px 'Liberation Mono';color:#111;transform:scaleX(0.955);transform-origin:100% 0;-webkit-text-stroke:0.35px #111;">3,104</div>
<div class="t" style="left:874.73px;top:550.81px;font:normal 24px/24px 'Liberation Mono';color:#111;transform:scaleX(0.955);transform-origin:100% 0;-webkit-text-stroke:0.35px #111;">668</div>
<div class="t" style="left:1000.53px;top:550.81px;font:normal 24px/24px 'Liberation Mono';color:#111;transform:scaleX(0.955);transform-origin:100% 0;-webkit-text-stroke:0.35px #111;">22</div>
<div class="t" style="left:1135.13px;top:550.81px;font:normal 24px/24px 'Liberation Mono';color:#111;transform:scaleX(0.955);transform-origin:100% 0;-webkit-text-stroke:0.35px #111;">1,062</div>
<div class="t" style="left:1221.60px;top:548.88px;font:normal 24px/24px 'Liberation Sans';color:#e8b85a;">MEDIUM</div>
<div class="t" style="left:1419.23px;top:550.81px;font:normal 24px/24px 'Liberation Mono';color:#111;transform:scaleX(0.955);transform-origin:100% 0;-webkit-text-stroke:0.35px #111;">28</div>
<div class="t" style="left:1541.33px;top:550.81px;font:normal 24px/24px 'Liberation Mono';color:#111;transform:scaleX(0.955);transform-origin:100% 0;-webkit-text-stroke:0.35px #111;">1,003</div>
<div class="t" style="left:34.80px;top:594.08px;font:normal 24px/24px 'Liberation Sans';color:#111;">Washers &amp; Dryers</div>
<div class="t" style="left:416.97px;top:596.25px;font:normal 22px/22px 'Liberation Mono';color:#111;transform:scaleX(0.9);transform-origin:100% 0;-webkit-text-stroke:0.35px #111;">3,334</div>
<div class="t" style="left:555.37px;top:596.01px;font:normal 24px/24px 'Liberation Mono';color:#111;transform:scaleX(0.955);transform-origin:100% 0;-webkit-text-stroke:0.35px #111;">4,701</div>
<div class="t" style="left:701.33px;top:596.01px;font:normal 24px/24px 'Liberation Mono';color:#111;transform:scaleX(0.955);transform-origin:100% 0;-webkit-text-stroke:0.35px #111;">1,755</div>
<div class="t" style="left:845.93px;top:596.01px;font:normal 24px/24px 'Liberation Mono';color:#111;transform:scaleX(0.955);transform-origin:100% 0;-webkit-text-stroke:0.35px #111;">1,580</div>
<div class="t" style="left:1000.53px;top:596.01px;font:normal 24px/24px 'Liberation Mono';color:#111;transform:scaleX(0.955);transform-origin:100% 0;-webkit-text-stroke:0.35px #111;">90</div>
<div class="t" style="left:1162.98px;top:596.01px;font:normal 24px/24px 'Liberation Mono';color:#111;transform:scaleX(0.955);transform-origin:100% 0;-webkit-text-stroke:0.35px #111;">321</div>
<div class="t" style="left:1221.60px;top:594.08px;font:normal 24px/24px 'Liberation Sans';color:#e8b85a;">MEDIUM</div>
<div class="t" style="left:1419.23px;top:596.01px;font:normal 24px/24px 'Liberation Mono';color:#111;transform:scaleX(0.955);transform-origin:100% 0;-webkit-text-stroke:0.35px #111;">10</div>
<div class="t" style="left:1570.13px;top:596.01px;font:normal 24px/24px 'Liberation Mono';color:#111;transform:scaleX(0.955);transform-origin:100% 0;-webkit-text-stroke:0.35px #111;">480</div>
<div class="t" style="left:33.80px;top:639.28px;font:normal 24px/24px 'Liberation Sans';color:#111;">Monitors</div>
<div class="t" style="left:417.87px;top:641.45px;font:normal 22px/22px 'Liberation Mono';color:#111;transform:scaleX(0.9);transform-origin:100% 0;-webkit-text-stroke:0.35px #111;">2,156</div>
<div class="t" style="left:585.13px;top:641.21px;font:normal 24px/24px 'Liberation Mono';color:#111;transform:scaleX(0.955);transform-origin:100% 0;-webkit-text-stroke:0.35px #111;">259</div>
<div class="t" style="left:701.33px;top:641.21px;font:normal 24px/24px 'Liberation Mono';color:#111;transform:scaleX(0.955);transform-origin:100% 0;-webkit-text-stroke:0.35px #111;">1,732</div>
<div class="t" style="left:873.78px;top:641.21px;font:normal 24px/24px 'Liberation Mono';color:#111;transform:scaleX(0.955);transform-origin:100% 0;-webkit-text-stroke:0.35px #111;">424</div>
<div class="t" style="left:999.58px;top:641.21px;font:normal 24px/24px 'Liberation Mono';color:#111;transform:scaleX(0.955);transform-origin:100% 0;-webkit-text-stroke:0.35px #111;">24</div>
<div class="t" style="left:1178.33px;top:641.21px;font:normal 24px/24px 'Liberation Mono';color:#111;transform:scaleX(0.955);transform-origin:100% 0;-webkit-text-stroke:0.35px #111;">37</div>
<div class="t" style="left:1221.60px;top:639.28px;font:normal 24px/24px 'Liberation Sans';color:#e8b85a;">MEDIUM</div>
<div class="t" style="left:1433.64px;top:641.21px;font:normal 24px/24px 'Liberation Mono';color:#111;transform:scaleX(0.955);transform-origin:100% 0;-webkit-text-stroke:0.35px #111;">2</div>
<div class="t" style="left:1541.33px;top:641.21px;font:normal 24px/24px 'Liberation Mono';color:#111;transform:scaleX(0.955);transform-origin:100% 0;-webkit-text-stroke:0.35px #111;">1,069</div>
<div class="t" style="left:33.80px;top:684.48px;font:normal 24px/24px 'Liberation Sans';color:#111;">Refrigerators</div>
<div class="t" style="left:416.97px;top:686.65px;font:normal 22px/22px 'Liberation Mono';color:#111;transform:scaleX(0.9);transform-origin:100% 0;-webkit-text-stroke:0.35px #111;">2,001</div>
<div class="t" style="left:555.37px;top:686.41px;font:normal 24px/24px 'Liberation Mono';color:#111;transform:scaleX(0.955);transform-origin:100% 0;-webkit-text-stroke:0.35px #111;">1,241</div>
<div class="t" style="left:701.33px;top:686.41px;font:normal 24px/24px 'Liberation Mono';color:#111;transform:scaleX(0.955);transform-origin:100% 0;-webkit-text-stroke:0.35px #111;">1,048</div>
<div class="t" style="left:874.73px;top:686.41px;font:normal 24px/24px 'Liberation Mono';color:#111;transform:scaleX(0.955);transform-origin:100% 0;-webkit-text-stroke:0.35px #111;">953</div>
<div class="t" style="left:999.58px;top:686.41px;font:normal 24px/24px 'Liberation Mono';color:#111;transform:scaleX(0.955);transform-origin:100% 0;-webkit-text-stroke:0.35px #111;">91</div>
<div class="t" style="left:1149.53px;top:686.41px;font:normal 24px/24px 'Liberation Mono';color:#111;transform:scaleX(0.955);transform-origin:100% 0;-webkit-text-stroke:0.35px #111;">-725</div>
<div class="t" style="left:1221.60px;top:684.48px;font:normal 24px/24px 'Liberation Sans';color:#a4161a;">LOW</div>
<div class="t" style="left:1404.83px;top:686.41px;font:normal 24px/24px 'Liberation Mono';color:#111;transform:scaleX(0.955);transform-origin:100% 0;-webkit-text-stroke:0.35px #111;">-36</div>
<div class="t" style="left:1570.13px;top:686.41px;font:normal 24px/24px 'Liberation Mono';color:#111;transform:scaleX(0.955);transform-origin:100% 0;-webkit-text-stroke:0.35px #111;">593</div>
<div class="t" style="left:33.80px;top:729.68px;font:normal 24px/24px 'Liberation Sans';color:#111;">Desktops</div>
<div class="t" style="left:417.87px;top:731.85px;font:normal 22px/22px 'Liberation Mono';color:#111;transform:scaleX(0.9);transform-origin:100% 0;-webkit-text-stroke:0.35px #111;">1,693</div>
<div class="t" style="left:585.13px;top:731.61px;font:normal 24px/24px 'Liberation Mono';color:#111;transform:scaleX(0.955);transform-origin:100% 0;-webkit-text-stroke:0.35px #111;">356</div>
<div class="t" style="left:701.33px;top:731.61px;font:normal 24px/24px 'Liberation Mono';color:#111;transform:scaleX(0.955);transform-origin:100% 0;-webkit-text-stroke:0.35px #111;">1,427</div>
<div class="t" style="left:874.73px;top:731.61px;font:normal 24px/24px 'Liberation Mono';color:#111;transform:scaleX(0.955);transform-origin:100% 0;-webkit-text-stroke:0.35px #111;">266</div>
<div class="t" style="left:1000.53px;top:731.61px;font:normal 24px/24px 'Liberation Mono';color:#111;transform:scaleX(0.955);transform-origin:100% 0;-webkit-text-stroke:0.35px #111;">19</div>
<div class="t" style="left:1163.93px;top:731.61px;font:normal 24px/24px 'Liberation Mono';color:#111;transform:scaleX(0.955);transform-origin:100% 0;-webkit-text-stroke:0.35px #111;">267</div>
<div class="t" style="left:1221.60px;top:729.68px;font:normal 24px/24px 'Liberation Sans';color:#e8b85a;">MEDIUM</div>
<div class="t" style="left:1419.23px;top:731.61px;font:normal 24px/24px 'Liberation Mono';color:#111;transform:scaleX(0.955);transform-origin:100% 0;-webkit-text-stroke:0.35px #111;">16</div>
<div class="t" style="left:1570.13px;top:731.61px;font:normal 24px/24px 'Liberation Mono';color:#111;transform:scaleX(0.955);transform-origin:100% 0;-webkit-text-stroke:0.35px #111;">703</div>
<div class="t" style="left:33.80px;top:774.88px;font:normal 24px/24px 'Liberation Sans';color:#111;">Printers, Scanners &amp; Fax</div>
<div class="t" style="left:417.87px;top:777.05px;font:normal 22px/22px 'Liberation Mono';color:#111;transform:scaleX(0.9);transform-origin:100% 0;-webkit-text-stroke:0.35px #111;">1,220</div>
<div class="t" style="left:556.33px;top:776.81px;font:normal 24px/24px 'Liberation Mono';color:#111;transform:scaleX(0.955);transform-origin:100% 0;-webkit-text-stroke:0.35px #111;">2,623</div>
<div class="t" style="left:700.37px;top:776.81px;font:normal 24px/24px 'Liberation Mono';color:#111;transform:scaleX(0.955);transform-origin:100% 0;-webkit-text-stroke:0.35px #111;">1,001</div>
<div class="t" style="left:874.73px;top:776.81px;font:normal 24px/24px 'Liberation Mono';color:#111;transform:scaleX(0.955);transform-origin:100% 0;-webkit-text-stroke:0.35px #111;">219</div>
<div class="t" style="left:1000.53px;top:776.81px;font:normal 24px/24px 'Liberation Mono';color:#111;transform:scaleX(0.955);transform-origin:100% 0;-webkit-text-stroke:0.35px #111;">22</div>
<div class="t" style="left:1163.93px;top:776.81px;font:normal 24px/24px 'Liberation Mono';color:#111;transform:scaleX(0.955);transform-origin:100% 0;-webkit-text-stroke:0.35px #111;">-43</div>
<div class="t" style="left:1221.60px;top:774.88px;font:normal 24px/24px 'Liberation Sans';color:#a4161a;">LOW</div>
<div class="t" style="left:1418.28px;top:776.81px;font:normal 24px/24px 'Liberation Mono';color:#111;transform:scaleX(0.955);transform-origin:100% 0;-webkit-text-stroke:0.35px #111;">-4</div>
<div class="t" style="left:1541.33px;top:776.81px;font:normal 24px/24px 'Liberation Mono';color:#111;transform:scaleX(0.955);transform-origin:100% 0;-webkit-text-stroke:0.35px #111;">1,228</div>
<div class="t" style="left:33.80px;top:820.08px;font:normal 24px/24px 'Liberation Sans';color:#111;">Coffee Machines</div>
<div class="t" style="left:417.87px;top:822.25px;font:normal 22px/22px 'Liberation Mono';color:#111;transform:scaleX(0.9);transform-origin:100% 0;-webkit-text-stroke:0.35px #111;">1,036</div>
<div class="t" style="left:585.13px;top:822.01px;font:normal 24px/24px 'Liberation Mono';color:#111;transform:scaleX(0.955);transform-origin:100% 0;-webkit-text-stroke:0.35px #111;">860</div>
<div class="t" style="left:730.13px;top:822.01px;font:normal 24px/24px 'Liberation Mono';color:#111;transform:scaleX(0.955);transform-origin:100% 0;-webkit-text-stroke:0.35px #111;">560</div>
<div class="t" style="left:874.73px;top:822.01px;font:normal 24px/24px 'Liberation Mono';color:#111;transform:scaleX(0.955);transform-origin:100% 0;-webkit-text-stroke:0.35px #111;">476</div>
<div class="t" style="left:1000.53px;top:822.01px;font:normal 24px/24px 'Liberation Mono';color:#111;transform:scaleX(0.955);transform-origin:100% 0;-webkit-text-stroke:0.35px #111;">85</div>
<div class="t" style="left:1163.93px;top:822.01px;font:normal 24px/24px 'Liberation Mono';color:#111;transform:scaleX(0.955);transform-origin:100% 0;-webkit-text-stroke:0.35px #111;">-29</div>
<div class="t" style="left:1221.60px;top:820.08px;font:normal 24px/24px 'Liberation Sans';color:#a4161a;">LOW</div>
<div class="t" style="left:1419.23px;top:822.01px;font:normal 24px/24px 'Liberation Mono';color:#111;transform:scaleX(0.955);transform-origin:100% 0;-webkit-text-stroke:0.35px #111;">-3</div>
<div class="t" style="left:1570.13px;top:822.01px;font:normal 24px/24px 'Liberation Mono';color:#111;transform:scaleX(0.955);transform-origin:100% 0;-webkit-text-stroke:0.35px #111;">457</div>
<div class="t" style="left:33.80px;top:865.28px;font:normal 24px/24px 'Liberation Sans';color:#111;">Lamps</div>
<div class="t" style="left:444.28px;top:867.45px;font:normal 22px/22px 'Liberation Mono';color:#111;transform:scaleX(0.9);transform-origin:100% 0;-webkit-text-stroke:0.35px #111;">988</div>
<div class="t" style="left:556.33px;top:867.21px;font:normal 24px/24px 'Liberation Mono';color:#111;transform:scaleX(0.955);transform-origin:100% 0;-webkit-text-stroke:0.35px #111;">1,226</div>
<div class="t" style="left:730.13px;top:867.21px;font:normal 24px/24px 'Liberation Mono';color:#111;transform:scaleX(0.955);transform-origin:100% 0;-webkit-text-stroke:0.35px #111;">518</div>
<div class="t" style="left:873.78px;top:867.21px;font:normal 24px/24px 'Liberation Mono';color:#111;transform:scaleX(0.955);transform-origin:100% 0;-webkit-text-stroke:0.35px #111;">471</div>
<div class="t" style="left:999.58px;top:867.21px;font:normal 24px/24px 'Liberation Mono';color:#111;transform:scaleX(0.955);transform-origin:100% 0;-webkit-text-stroke:0.35px #111;">91</div>
<div class="t" style="left:1163.93px;top:867.21px;font:normal 24px/24px 'Liberation Mono';color:#111;transform:scaleX(0.955);transform-origin:100% 0;-webkit-text-stroke:0.35px #111;">717</div>
<div class="t" style="left:1221.60px;top:865.28px;font:normal 24px/24px 'Liberation Sans';color:#5a8a1a;">HIGH</div>
<div class="t" style="left:1419.23px;top:867.21px;font:normal 24px/24px 'Liberation Mono';color:#111;transform:scaleX(0.955);transform-origin:100% 0;-webkit-text-stroke:0.35px #111;">72</div>
<div class="t" style="left:1570.13px;top:867.21px;font:normal 24px/24px 'Liberation Mono';color:#111;transform:scaleX(0.955);transform-origin:100% 0;-webkit-text-stroke:0.35px #111;">935</div>
<div class="t" style="left:34.80px;top:910.48px;font:normal 24px/24px 'Liberation Sans';color:#111;">Water Heaters</div>
<div class="t" style="left:443.38px;top:912.65px;font:normal 22px/22px 'Liberation Mono';color:#111;transform:scaleX(0.9);transform-origin:100% 0;-webkit-text-stroke:0.35px #111;">791</div>
<div class="t" style="left:555.37px;top:912.41px;font:normal 24px/24px 'Liberation Mono';color:#111;transform:scaleX(0.955);transform-origin:100% 0;-webkit-text-stroke:0.35px #111;">1,194</div>
<div class="t" style="left:730.13px;top:912.41px;font:normal 24px/24px 'Liberation Mono';color:#111;transform:scaleX(0.955);transform-origin:100% 0;-webkit-text-stroke:0.35px #111;">347</div>
<div class="t" style="left:874.73px;top:912.41px;font:normal 24px/24px 'Liberation Mono';color:#111;transform:scaleX(0.955);transform-origin:100% 0;-webkit-text-stroke:0.35px #111;">443</div>
<div class="t" style="left:986.13px;top:912.41px;font:normal 24px/24px 'Liberation Mono';color:#111;transform:scaleX(0.955);transform-origin:100% 0;-webkit-text-stroke:0.35px #111;">128</div>
<div class="t" style="left:1163.93px;top:912.41px;font:normal 24px/24px 'Liberation Mono';color:#111;transform:scaleX(0.955);transform-origin:100% 0;-webkit-text-stroke:0.35px #111;">150</div>
<div class="t" style="left:1221.60px;top:910.48px;font:normal 24px/24px 'Liberation Sans';color:#e8b85a;">MEDIUM</div>
<div class="t" style="left:1419.23px;top:912.41px;font:normal 24px/24px 'Liberation Mono';color:#111;transform:scaleX(0.955);transform-origin:100% 0;-webkit-text-stroke:0.35px #111;">19</div>
<div class="t" style="left:1570.13px;top:912.41px;font:normal 24px/24px 'Liberation Mono';color:#111;transform:scaleX(0.955);transform-origin:100% 0;-webkit-text-stroke:0.35px #111;">259</div>
<div class="t" style="left:33.80px;top:955.68px;font:normal 24px/24px 'Liberation Sans';color:#111;">Computers Accessories</div>
<div class="t" style="left:444.28px;top:957.85px;font:normal 22px/22px 'Liberation Mono';color:#111;transform:scaleX(0.9);transform-origin:100% 0;-webkit-text-stroke:0.35px #111;">700</div>
<div class="t" style="left:585.13px;top:957.61px;font:normal 24px/24px 'Liberation Mono';color:#111;transform:scaleX(0.955);transform-origin:100% 0;-webkit-text-stroke:0.35px #111;">329</div>
<div class="t" style="left:730.13px;top:957.61px;font:normal 24px/24px 'Liberation Mono';color:#111;transform:scaleX(0.955);transform-origin:100% 0;-webkit-text-stroke:0.35px #111;">572</div>
<div class="t" style="left:874.73px;top:957.61px;font:normal 24px/24px 'Liberation Mono';color:#111;transform:scaleX(0.955);transform-origin:100% 0;-webkit-text-stroke:0.35px #111;">128</div>
<div class="t" style="left:1000.53px;top:957.61px;font:normal 24px/24px 'Liberation Mono';color:#111;transform:scaleX(0.955);transform-origin:100% 0;-webkit-text-stroke:0.35px #111;">22</div>
<div class="t" style="left:1149.53px;top:957.61px;font:normal 24px/24px 'Liberation Mono';color:#111;transform:scaleX(0.955);transform-origin:100% 0;-webkit-text-stroke:0.35px #111;">-108</div>
<div class="t" style="left:1221.60px;top:955.68px;font:normal 24px/24px 'Liberation Sans';color:#a4161a;">LOW</div>
<div class="t" style="left:1404.83px;top:957.61px;font:normal 24px/24px 'Liberation Mono';color:#111;transform:scaleX(0.955);transform-origin:100% 0;-webkit-text-stroke:0.35px #111;">-15</div>
<div class="t" style="left:1541.33px;top:957.61px;font:normal 24px/24px 'Liberation Mono';color:#111;transform:scaleX(0.955);transform-origin:100% 0;-webkit-text-stroke:0.35px #111;">2,039</div>
<div class="t" style="left:33.80px;top:1000.88px;font:normal 24px/24px 'Liberation Sans';color:#111;">Microwaves</div>
<div class="t" style="left:444.28px;top:1003.05px;font:normal 22px/22px 'Liberation Mono';color:#111;transform:scaleX(0.9);transform-origin:100% 0;-webkit-text-stroke:0.35px #111;">629</div>
<div class="t" style="left:585.13px;top:1002.81px;font:normal 24px/24px 'Liberation Mono';color:#111;transform:scaleX(0.955);transform-origin:100% 0;-webkit-text-stroke:0.35px #111;">296</div>
<div class="t" style="left:730.13px;top:1002.81px;font:normal 24px/24px 'Liberation Mono';color:#111;transform:scaleX(0.955);transform-origin:100% 0;-webkit-text-stroke:0.35px #111;">310</div>
<div class="t" style="left:874.73px;top:1002.81px;font:normal 24px/24px 'Liberation Mono';color:#111;transform:scaleX(0.955);transform-origin:100% 0;-webkit-text-stroke:0.35px #111;">319</div>
<div class="t" style="left:986.13px;top:1002.81px;font:normal 24px/24px 'Liberation Mono';color:#111;transform:scaleX(0.955);transform-origin:100% 0;-webkit-text-stroke:0.35px #111;">103</div>
<div class="t" style="left:1177.38px;top:1002.81px;font:normal 24px/24px 'Liberation Mono';color:#111;transform:scaleX(0.955);transform-origin:100% 0;-webkit-text-stroke:0.35px #111;">21</div>
<div class="t" style="left:1221.60px;top:1000.88px;font:normal 24px/24px 'Liberation Sans';color:#e8b85a;">MEDIUM</div>
<div class="t" style="left:1433.64px;top:1002.81px;font:normal 24px/24px 'Liberation Mono';color:#111;transform:scaleX(0.955);transform-origin:100% 0;-webkit-text-stroke:0.35px #111;">3</div>
<div class="t" style="left:1570.13px;top:1002.81px;font:normal 24px/24px 'Liberation Mono';color:#111;transform:scaleX(0.955);transform-origin:100% 0;-webkit-text-stroke:0.35px #111;">662</div>
<div class="t" style="left:34.80px;top:1046.08px;font:normal 24px/24px 'Liberation Sans';color:#111;">Air Conditioners</div>
<div class="t" style="left:444.28px;top:1048.25px;font:normal 22px/22px 'Liberation Mono';color:#111;transform:scaleX(0.9);transform-origin:100% 0;-webkit-text-stroke:0.35px #111;">600</div>
<div class="t" style="left:585.13px;top:1048.01px;font:normal 24px/24px 'Liberation Mono';color:#111;transform:scaleX(0.955);transform-origin:100% 0;-webkit-text-stroke:0.35px #111;">630</div>
<div class="t" style="left:730.13px;top:1048.01px;font:normal 24px/24px 'Liberation Mono';color:#111;transform:scaleX(0.955);transform-origin:100% 0;-webkit-text-stroke:0.35px #111;">347</div>
<div class="t" style="left:874.73px;top:1048.01px;font:normal 24px/24px 'Liberation Mono';color:#111;transform:scaleX(0.955);transform-origin:100% 0;-webkit-text-stroke:0.35px #111;">253</div>
<div class="t" style="left:1000.53px;top:1048.01px;font:normal 24px/24px 'Liberation Mono';color:#111;transform:scaleX(0.955);transform-origin:100% 0;-webkit-text-stroke:0.35px #111;">73</div>
<div class="t" style="left:1162.98px;top:1048.01px;font:normal 24px/24px 'Liberation Mono';color:#111;transform:scaleX(0.955);transform-origin:100% 0;-webkit-text-stroke:0.35px #111;">331</div>
<div class="t" style="left:1221.60px;top:1046.08px;font:normal 24px/24px 'Liberation Sans';color:#5a8a1a;">HIGH</div>
<div class="t" style="left:1419.23px;top:1048.01px;font:normal 24px/24px 'Liberation Mono';color:#111;transform:scaleX(0.955);transform-origin:100% 0;-webkit-text-stroke:0.35px #111;">55</div>
<div class="t" style="left:1569.18px;top:1048.01px;font:normal 24px/24px 'Liberation Mono';color:#111;transform:scaleX(0.955);transform-origin:100% 0;-webkit-text-stroke:0.35px #111;">421</div>
<div class="t" style="left:33.80px;top:1091.28px;font:normal 24px/24px 'Liberation Sans';color:#111;">Fans</div>
<div class="t" style="left:444.28px;top:1093.45px;font:normal 22px/22px 'Liberation Mono';color:#111;transform:scaleX(0.9);transform-origin:100% 0;-webkit-text-stroke:0.35px #111;">185</div>
<div class="t" style="left:584.18px;top:1093.21px;font:normal 24px/24px 'Liberation Mono';color:#111;transform:scaleX(0.955);transform-origin:100% 0;-webkit-text-stroke:0.35px #111;">194</div>
<div class="t" style="left:729.18px;top:1093.21px;font:normal 24px/24px 'Liberation Mono';color:#111;transform:scaleX(0.955);transform-origin:100% 0;-webkit-text-stroke:0.35px #111;">101</div>
<div class="t" style="left:889.13px;top:1093.21px;font:normal 24px/24px 'Liberation Mono';color:#111;transform:scaleX(0.955);transform-origin:100% 0;-webkit-text-stroke:0.35px #111;">83</div>
<div class="t" style="left:1000.53px;top:1093.21px;font:normal 24px/24px 'Liberation Mono';color:#111;transform:scaleX(0.955);transform-origin:100% 0;-webkit-text-stroke:0.35px #111;">82</div>
<div class="t" style="left:1163.93px;top:1093.21px;font:normal 24px/24px 'Liberation Mono';color:#111;transform:scaleX(0.955);transform-origin:100% 0;-webkit-text-stroke:0.35px #111;">-67</div>
<div class="t" style="left:1221.60px;top:1091.28px;font:normal 24px/24px 'Liberation Sans';color:#a4161a;">LOW</div>
<div class="t" style="left:1404.83px;top:1093.21px;font:normal 24px/24px 'Liberation Mono';color:#111;transform:scaleX(0.955);transform-origin:100% 0;-webkit-text-stroke:0.35px #111;">-36</div>
<div class="t" style="left:1570.13px;top:1093.21px;font:normal 24px/24px 'Liberation Mono';color:#111;transform:scaleX(0.955);transform-origin:100% 0;-webkit-text-stroke:0.35px #111;">513</div>
<div class="t" style="left:3.00px;top:1253.27px;font:normal 22px/22px 'Liberation Sans';color:#333;transform:scaleX(0.9550);transform-origin:0 0;">Total rows: 15</div>
<div class="t" style="left:1021.65px;top:1252.87px;font:normal 22px/22px 'Liberation Sans';color:#333;transform:scaleX(0.9502);transform-origin:0 0;">Rows per page:</div>
<div class="t" style="left:1197.00px;top:1256.87px;font:normal 22px/22px 'Liberation Sans';color:#333;transform:scaleX(0.9762);transform-origin:0 0;">All</div>
<div class="t" style="left:2179.63px;top:1257.67px;font:normal 22px/22px 'Liberation Sans';color:#333;transform:scaleX(0.9688);transform-origin:0 0;">100%</div>
<div class="dd"></div>
<svg width="2304" height="1289" viewBox="0 0 2304 1289" style="pointer-events:none"><defs><filter id="blur2" x="-20%" y="-20%" width="140%" height="140%"><feGaussianBlur stdDeviation="1.2"/></filter></defs>
<rect x="1007.1" y="80.2" width="68.2" height="113.4" rx="5" fill="none" stroke="#ff0000" stroke-width="2.8"/>
<rect x="1016.2" y="257.6" width="127.2" height="41" rx="3" fill="none" stroke="#000" stroke-opacity="0.12" stroke-width="3" filter="url(#blur2)"/>
<rect x="1015.9" y="257.4" width="127.8" height="41.4" rx="4" fill="none" stroke="#ff0000" stroke-width="2.8"/>
<path d="M1156 332.5 L1162 339.3 L1176 325.3" fill="none" stroke="#333" stroke-width="1.5"/>
</svg>
<div class="t" style="left:1029.60px;top:210.37px;font:normal 20px/20px 'Liberation Sans';color:#242424;transform:scaleX(0.9481);transform-origin:0 0;">YoY Sales</div>
<div class="t" style="left:1028.53px;top:269.37px;font:normal 20px/20px 'Liberation Sans';color:#242424;transform:scaleX(1.0742);transform-origin:0 0;">Margin %</div>
<div class="t" style="left:1028.52px;top:326.77px;font:normal 20px/20px 'Liberation Sans';color:#242424;transform:scaleX(1.0795);transform-origin:0 0;">None</div>
</body></html>
